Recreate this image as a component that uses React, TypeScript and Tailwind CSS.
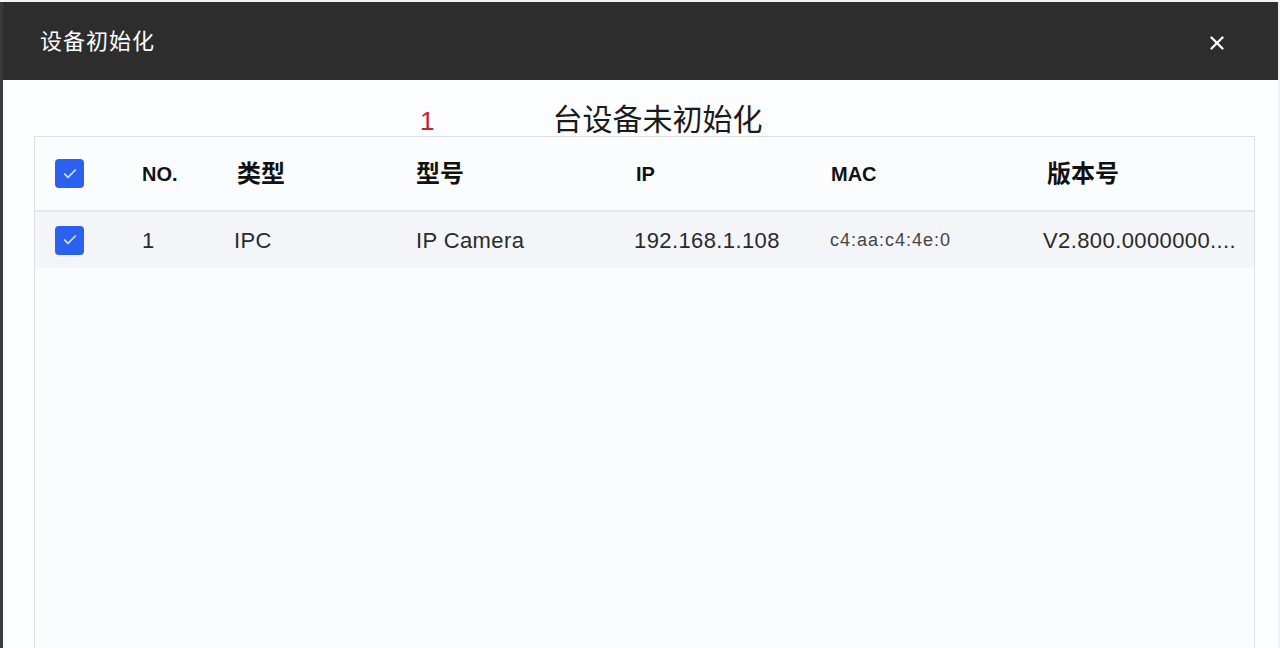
import { X, Check } from "lucide-react";

interface Device {
  no: number;
  type: string;
  model: string;
  ip: string;
  mac: string;
  version: string;
}

const devices: Device[] = [
  { no: 1, type: "IPC", model: "IP Camera", ip: "192.168.1.108", mac: "c4:aa:c4:4e:0", version: "V2.800.0000000...." },
];

function Box() {
  return (
    <div className="w-[29px] h-[29px] rounded-[4px] bg-[#2a62ef] flex items-center justify-center">
      <Check className="w-[16px] h-[16px] text-[#d6e2ff]" strokeWidth={2.5} />
    </div>
  );
}

export default function App() {
  return (
    <div
      className="w-[1280px] h-[648px] overflow-hidden bg-[#f2f2f2] pt-[2px] pr-[2px]"
      style={{ fontFamily: '"Liberation Sans", Arial, "Noto Sans CJK SC", sans-serif' }}
    >
      <div className="h-full border-l-[3px] border-[#3a3a3e] flex flex-col bg-[#fcfdfe]">
        <div className="h-[78px] bg-[#2d2d2d] flex items-center justify-between pl-[37px] pr-[50px] shrink-0">
          <span className="text-white text-[22px] tracking-[1px]">设备初始化</span>
          <X className="w-[22px] h-[22px] text-white mt-[3px]" strokeWidth={2.6} />
        </div>

        <div className="flex-1 px-[31px] pr-[23px] flex flex-col">
          <div className="h-[56px] flex items-end pb-[1px] text-[30px] leading-none">
            <span className="ml-[386px] text-[#c8202c] text-[26px] mb-[1px]">1</span>
            <span className="ml-[118px] text-[#1a1a1a]">台设备未初始化</span>
          </div>

          <div className="flex-1 border border-[#dcdfe6] border-b-0 bg-[#fbfcfe]">
            <div className="h-[75px] flex items-center border-b-2 border-[#e3e6ed] text-[20px] font-bold text-[#111]">
              <div className="w-[107px] pl-[20px]">
                <Box />
              </div>
              <div className="w-[95px]">NO.</div>
              <div className="w-[179px] text-[24px]">类型</div>
              <div className="w-[220px] text-[24px]">型号</div>
              <div className="w-[195px]">IP</div>
              <div className="w-[216px]">MAC</div>
              <div className="flex-1 text-[24px]">版本号</div>
            </div>

            {devices.map((d) => (
              <div
                key={d.no}
                className="h-[56px] flex items-center bg-[#f3f5f9] text-[22px] tracking-[0.4px] text-[#2a2a2a]"
              >
                <div className="w-[107px] pl-[20px]">
                  <Box />
                </div>
                <div className="w-[92px]">{d.no}</div>
                <div className="w-[182px]">{d.type}</div>
                <div className="w-[218px]">{d.model}</div>
                <div className="w-[196px]">{d.ip}</div>
                <div className="w-[213px] text-[#444] text-[18px] tracking-[1px]">{d.mac}</div>
                <div className="flex-1 whitespace-nowrap">{d.version}</div>
              </div>
            ))}
          </div>
        </div>
      </div>
    </div>
  );
}
